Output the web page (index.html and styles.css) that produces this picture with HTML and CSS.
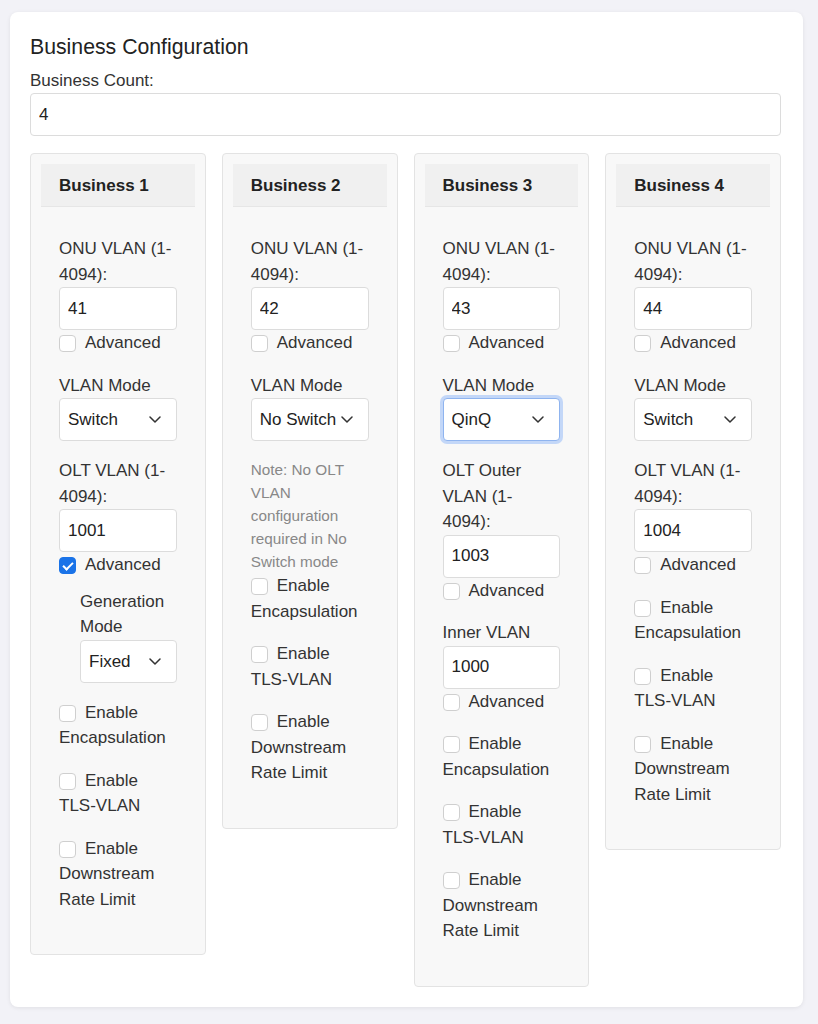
FILE: index.html
```html
<!DOCTYPE html>
<html lang="en">
<head>
<meta charset="utf-8">
<title>Business Configuration</title>
<link rel="stylesheet" href="styles.css">
</head>
<body>
<div class="panel">
  <h2 class="panel-title">Business Configuration</h2>
  <label class="field-label">Business Count:</label>
  <input class="count-input" type="text" value="4">

  <div class="biz-grid">
    <!-- Business 1 -->
    <section class="biz-card">
      <div class="biz-head">Business 1</div>
      <div class="biz-body">
        <div class="group">
          <label class="lbl">ONU VLAN (1-4094):</label>
          <input class="num" type="text" value="41">
          <label class="check"><input type="checkbox">Advanced</label>
        </div>
        <div class="group">
          <label class="lbl">VLAN Mode</label>
          <div class="select-wrap">
            <select class="sel"><option>Switch</option></select>
            <svg class="chev" viewBox="0 0 12 7" width="12" height="7"><path d="M1 1l5 5 5-5" fill="none" stroke="#333" stroke-width="1.5" stroke-linecap="round" stroke-linejoin="round"/></svg>
          </div>
        </div>
        <div class="group">
          <label class="lbl">OLT VLAN (1-4094):</label>
          <input class="num" type="text" value="1001">
          <label class="check"><input type="checkbox" checked>Advanced</label>
          <div class="sub">
            <label class="lbl">Generation Mode</label>
            <div class="select-wrap">
              <select class="sel"><option>Fixed</option></select>
              <svg class="chev" viewBox="0 0 12 7" width="12" height="7"><path d="M1 1l5 5 5-5" fill="none" stroke="#333" stroke-width="1.5" stroke-linecap="round" stroke-linejoin="round"/></svg>
            </div>
          </div>
        </div>
        <div class="group">
          <label class="check"><input type="checkbox">Enable Encapsulation</label>
        </div>
        <div class="group">
          <label class="check"><input type="checkbox">Enable TLS-VLAN</label>
        </div>
        <div class="group">
          <label class="check"><input type="checkbox">Enable Downstream Rate Limit</label>
        </div>
      </div>
    </section>

    <!-- Business 2 -->
    <section class="biz-card">
      <div class="biz-head">Business 2</div>
      <div class="biz-body">
        <div class="group">
          <label class="lbl">ONU VLAN (1-4094):</label>
          <input class="num" type="text" value="42">
          <label class="check"><input type="checkbox">Advanced</label>
        </div>
        <div class="group">
          <label class="lbl">VLAN Mode</label>
          <div class="select-wrap">
            <select class="sel sel-tight"><option>No Switch</option></select>
            <svg class="chev" viewBox="0 0 12 7" width="12" height="7"><path d="M1 1l5 5 5-5" fill="none" stroke="#333" stroke-width="1.5" stroke-linecap="round" stroke-linejoin="round"/></svg>
          </div>
        </div>
        <div class="note">Note: No OLT VLAN configuration required in No Switch mode</div>
        <div class="group">
          <label class="check"><input type="checkbox">Enable Encapsulation</label>
        </div>
        <div class="group">
          <label class="check"><input type="checkbox">Enable TLS-VLAN</label>
        </div>
        <div class="group">
          <label class="check"><input type="checkbox">Enable Downstream Rate Limit</label>
        </div>
      </div>
    </section>

    <!-- Business 3 -->
    <section class="biz-card">
      <div class="biz-head">Business 3</div>
      <div class="biz-body">
        <div class="group">
          <label class="lbl">ONU VLAN (1-4094):</label>
          <input class="num" type="text" value="43">
          <label class="check"><input type="checkbox">Advanced</label>
        </div>
        <div class="group">
          <label class="lbl">VLAN Mode</label>
          <div class="select-wrap">
            <select class="sel is-focused"><option>QinQ</option></select>
            <svg class="chev" viewBox="0 0 12 7" width="12" height="7"><path d="M1 1l5 5 5-5" fill="none" stroke="#333" stroke-width="1.5" stroke-linecap="round" stroke-linejoin="round"/></svg>
          </div>
        </div>
        <div class="group">
          <label class="lbl">OLT Outer VLAN (1-4094):</label>
          <input class="num" type="text" value="1003">
          <label class="check"><input type="checkbox">Advanced</label>
        </div>
        <div class="group">
          <label class="lbl">Inner VLAN</label>
          <input class="num" type="text" value="1000">
          <label class="check"><input type="checkbox">Advanced</label>
        </div>
        <div class="group">
          <label class="check"><input type="checkbox">Enable Encapsulation</label>
        </div>
        <div class="group">
          <label class="check"><input type="checkbox">Enable TLS-VLAN</label>
        </div>
        <div class="group">
          <label class="check"><input type="checkbox">Enable Downstream Rate Limit</label>
        </div>
      </div>
    </section>

    <!-- Business 4 -->
    <section class="biz-card">
      <div class="biz-head">Business 4</div>
      <div class="biz-body">
        <div class="group">
          <label class="lbl">ONU VLAN (1-4094):</label>
          <input class="num" type="text" value="44">
          <label class="check"><input type="checkbox">Advanced</label>
        </div>
        <div class="group">
          <label class="lbl">VLAN Mode</label>
          <div class="select-wrap">
            <select class="sel"><option>Switch</option></select>
            <svg class="chev" viewBox="0 0 12 7" width="12" height="7"><path d="M1 1l5 5 5-5" fill="none" stroke="#333" stroke-width="1.5" stroke-linecap="round" stroke-linejoin="round"/></svg>
          </div>
        </div>
        <div class="group">
          <label class="lbl">OLT VLAN (1-4094):</label>
          <input class="num" type="text" value="1004">
          <label class="check"><input type="checkbox">Advanced</label>
        </div>
        <div class="group">
          <label class="check"><input type="checkbox">Enable Encapsulation</label>
        </div>
        <div class="group">
          <label class="check"><input type="checkbox">Enable TLS-VLAN</label>
        </div>
        <div class="group">
          <label class="check"><input type="checkbox">Enable Downstream Rate Limit</label>
        </div>
      </div>
    </section>
  </div>
</div>
</body>
</html>
```
FILE: styles.css
```css
html, body {
  margin: 0;
}

body {
  background: #f2f2f7;
  font-family: "Liberation Sans", Arial, sans-serif;
  font-size: 17px;
  color: #333;
  padding: 12px 15px 16px 10px;
}

.panel {
  background: #fff;
  border-radius: 8px;
  box-shadow: 0 1px 4px rgba(0, 0, 0, 0.08);
  padding: 22px 22px 20px 20px;
}

.panel-title {
  margin: 0 0 6px;
  font-size: 21.25px;
  font-weight: normal;
  line-height: 27.5px;
  color: #222;
}

.field-label {
  display: block;
  line-height: 25.5px;
}

.count-input,
.num,
.sel {
  display: block;
  width: 100%;
  height: 43px;
  box-sizing: border-box;
  border: 1px solid #dcdcdc;
  border-radius: 4px;
  background: #fff;
  padding: 0 8px;
  font: inherit;
  color: #222;
  outline: none;
}

.biz-grid {
  display: grid;
  grid-template-columns: repeat(4, minmax(0, 1fr));
  gap: 16px;
  margin-top: 17px;
  align-items: start;
}

.biz-card {
  background: #f8f8f8;
  border: 1px solid #e3e3e3;
  border-radius: 4px;
  padding: 10px;
}

.biz-head {
  box-sizing: border-box;
  height: 43px;
  padding: 1px 18px 0;
  display: flex;
  align-items: center;
  background: #f0f0f0;
  border-bottom: 1px solid #e6e6e6;
  font-weight: bold;
  color: #222;
}

.biz-body {
  padding: 29px 18px 15px;
}

.group {
  margin-bottom: 17px;
}

.lbl {
  display: block;
  line-height: 25.5px;
}

.check {
  display: block;
  line-height: 25.5px;
}

.check input {
  appearance: none;
  -webkit-appearance: none;
  position: relative;
  width: 17px;
  height: 17px;
  margin: 0 9px 0 0;
  border: 1px solid #cfcfcf;
  border-radius: 4px;
  background: #fff;
  vertical-align: -4px;
  box-sizing: border-box;
}

.check input:checked {
  background: #1a73e8;
  border-color: #1a73e8;
}

.check input:checked::after {
  content: "";
  position: absolute;
  left: 5px;
  top: 2px;
  width: 4px;
  height: 8px;
  border: solid #fff;
  border-width: 0 2px 2px 0;
  transform: rotate(45deg);
}

.select-wrap {
  position: relative;
}

.sel {
  appearance: none;
  -webkit-appearance: none;
  padding-right: 28px;
}

.sel-tight {
  padding-right: 4px;
}

.sel.is-focused {
  border-color: #8fb4ef;
  box-shadow: 0 0 0 3px #c3d7f8;
}

.chev {
  position: absolute;
  right: 16px;
  top: 18px;
  pointer-events: none;
}

.sub {
  margin-top: 11px;
  padding-left: 21px;
}

.note {
  margin-top: 0;
  font-size: 15.3px;
  line-height: 23px;
  color: #888;
}
```
